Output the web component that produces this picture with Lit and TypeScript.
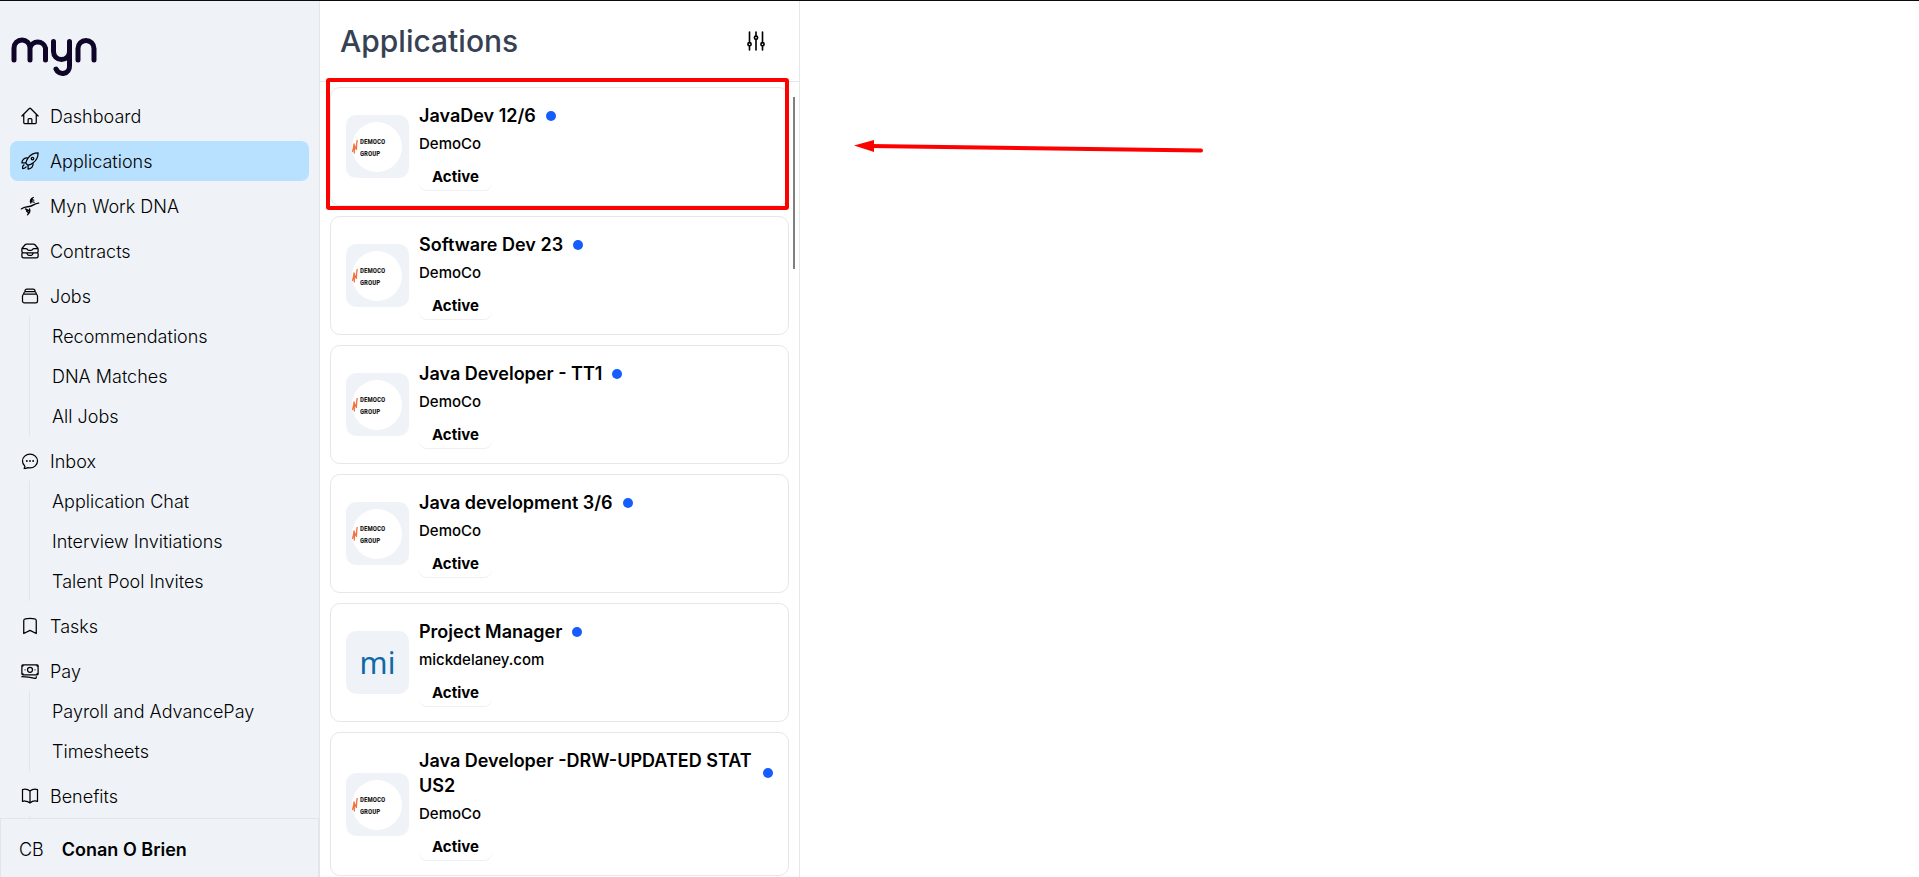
import { LitElement, html, svg, css, nothing } from "lit";
import { customElement } from "lit/decorators.js";
import { classMap } from "lit/directives/class-map.js";

interface NavItem {
  label: string;
  icon: string;
  active?: boolean;
  children?: string[];
}

interface Application {
  title: string;
  company: string;
  status: string;
  initials?: string;
  highlighted?: boolean;
}

const ICONS: Record<string, string[]> = {
  home: [
    "m2.25 12 8.954-8.955c.44-.439 1.152-.439 1.591 0L21.75 12M4.5 9.75v10.125c0 .621.504 1.125 1.125 1.125H9.75v-4.875c0-.621.504-1.125 1.125-1.125h2.25c.621 0 1.125.504 1.125 1.125V21h4.125c.621 0 1.125-.504 1.125-1.125V9.75M8.25 21h8.25",
  ],
  rocket: [
    "M15.59 14.37a6 6 0 0 1-5.84 7.38v-4.8m5.84-2.58a14.98 14.98 0 0 0 6.16-12.12A14.98 14.98 0 0 0 9.631 8.41m5.96 5.96a14.926 14.926 0 0 1-5.841 2.58m-.119-8.54a6 6 0 0 0-7.381 5.84h4.8m2.581-5.84a14.927 14.927 0 0 0-2.58 5.84m2.699 2.7c-.103.021-.207.041-.311.06a15.09 15.09 0 0 1-2.448-2.448 14.9 14.9 0 0 1 .06-.312m-2.24 2.39a4.493 4.493 0 0 0-1.757 4.306 4.493 4.493 0 0 0 4.306-1.758M16.5 9a1.5 1.5 0 1 1-3 0 1.5 1.5 0 0 1 3 0Z",
  ],
  dna: [
    "M1.5 15.5C5 12.5 9 13 12.5 12S18 8.500 22.5 8.500M2.500 15C6 12.500 9 13.500 12.500 12.500S18 9 22 8.700",
    "M13 8.500C11.500 5.500 13 3 16 1.800M13 6.500l4 1M13.800 4.500l2.700.5M13.200 7.500l1.500-4",
    "M11.500 15.500c1 3-.5 5.500-2.500 7M6.500 15.500l4.500 2M8 18.500l2.500 1M7.500 16.500l2.500 4",
  ],
  contracts: [
    "m7.875 14.25 1.214 1.942a2.25 2.25 0 0 0 1.908 1.058h2.006c.776 0 1.497-.4 1.908-1.058l1.214-1.942M2.41 9h4.636a2.25 2.25 0 0 1 1.872 1.002l.164.246a2.25 2.25 0 0 0 1.872 1.002h2.092a2.25 2.25 0 0 0 1.872-1.002l.164-.246A2.25 2.25 0 0 1 16.954 9h4.636M2.41 9a2.25 2.25 0 0 0-.16.832V12a2.25 2.25 0 0 0 2.25 2.25h15A2.25 2.25 0 0 0 21.750 12V9.832c0-.287-.055-.57-.16-.832M2.41 9a2.25 2.25 0 0 1 .382-.632l3.285-3.832a2.25 2.25 0 0 1 1.708-.786h8.430c.657 0 1.281.287 1.709.786l3.284 3.832c.163.19.291.404.382.632M4.500 20.250h15A2.25 2.25 0 0 0 21.750 18v-2.625c0-.621-.504-1.125-1.125-1.125H3.375c-.621 0-1.125.504-1.125 1.125V18a2.25 2.25 0 0 0 2.25 2.25Z",
  ],
  stack: [
    "M6 6.878V6a2.25 2.25 0 0 1 2.25-2.25h7.5A2.25 2.25 0 0 1 18 6v.878m-12 0c.235-.083.487-.128.75-.128h10.5c.263 0 .515.045.75.128m-12 0A2.25 2.25 0 0 0 4.5 9v.878m13.5-3A2.25 2.25 0 0 1 19.5 9v.878m0 0a2.246 2.246 0 0 0-.75-.128H5.25c-.263 0-.515.045-.75.128m15 0A2.25 2.25 0 0 1 21 12v6a2.25 2.25 0 0 1-2.25 2.25H5.25A2.25 2.25 0 0 1 3 18v-6c0-.98.626-1.813 1.5-2.122",
  ],
  bubble: [
    "M8.625 12a.375.375 0 1 1-.75 0 .375.375 0 0 1 .75 0Zm0 0H8.25m4.125 0a.375.375 0 1 1-.75 0 .375.375 0 0 1 .75 0Zm0 0H12m4.125 0a.375.375 0 1 1-.75 0 .375.375 0 0 1 .75 0Zm0 0h-.375M21 12c0 4.556-4.03 8.25-9 8.25a9.764 9.764 0 0 1-2.555-.337A5.972 5.972 0 0 1 5.41 20.97a5.969 5.969 0 0 1-.474-.065 4.48 4.48 0 0 0 .978-2.025c.09-.457-.133-.901-.467-1.226C3.93 16.178 3 14.189 3 12c0-4.556 4.03-8.25 9-8.25s9 3.694 9 8.25Z",
  ],
  bookmark: [
    "M17.593 3.322c1.1.128 1.907 1.077 1.907 2.185V21L12 17.25 4.5 21V5.507c0-1.108.806-2.057 1.907-2.185a48.507 48.507 0 0 1 11.186 0Z",
  ],
  cash: [
    "M2.25 18.75a60.07 60.07 0 0 1 15.797 2.101c.727.198 1.453-.342 1.453-1.096V18.75M3.75 4.5v.75A.75.75 0 0 1 3 6h-.75m0 0v-.375c0-.621.504-1.125 1.125-1.125H20.250M2.250 6v9m18-10.500v.750c0 .414.336.750.750.750h.750m-1.500-1.500h.375c.621 0 1.125.504 1.125 1.125v9.750c0 .621-.504 1.125-1.125 1.125h-.375m1.500-1.500H21a.75.75 0 0 0-.75.75v.75m0 0H3.750m0 0h-.375a1.125 1.125 0 0 1-1.125-1.125V15m1.500 1.500v-.75A.75.75 0 0 0 3 15h-.75M15 10.500a3 3 0 1 1-6 0 3 3 0 0 1 6 0Zm3 0h.008v.008H18V10.500Zm-12 0h.008v.008H6V10.500Z",
  ],
  book: [
    "M12 6.042A8.967 8.967 0 0 0 6 3.75c-1.052 0-2.062.18-3 .512v14.25A8.987 8.987 0 0 1 6 18c2.305 0 4.408.867 6 2.292m0-14.25a8.966 8.966 0 0 1 6-2.292c1.052 0 2.062.18 3 .512v14.25A8.987 8.987 0 0 0 18 18a8.967 8.967 0 0 0-6 2.292m0-14.25v14.25",
  ],
  sliders: [
    "M6 13.5V3.75m0 9.75a1.5 1.5 0 0 1 0 3m0-3a1.5 1.5 0 0 0 0 3m0 3.75V16.5m12-3V3.75m0 9.75a1.5 1.5 0 0 1 0 3m0-3a1.5 1.5 0 0 0 0 3m0 3.75V16.5m-6-9V3.75m0 3.75a1.5 1.5 0 0 1 0 3m0-3a1.5 1.5 0 0 0 0 3m0 9.75V10.5",
  ],
};

const NAV: NavItem[] = [
  { label: "Dashboard", icon: "home" },
  { label: "Applications", icon: "rocket", active: true },
  { label: "Myn Work DNA", icon: "dna" },
  { label: "Contracts", icon: "contracts" },
  { label: "Jobs", icon: "stack", children: ["Recommendations", "DNA Matches", "All Jobs"] },
  {
    label: "Inbox",
    icon: "bubble",
    children: ["Application Chat", "Interview Invitiations", "Talent Pool Invites"],
  },
  { label: "Tasks", icon: "bookmark" },
  { label: "Pay", icon: "cash", children: ["Payroll and AdvancePay", "Timesheets"] },
  { label: "Benefits", icon: "book", children: [] },
];

const APPLICATIONS: Application[] = [
  { title: "JavaDev 12/6", company: "DemoCo", status: "Active", highlighted: true },
  { title: "Software Dev 23", company: "DemoCo", status: "Active" },
  { title: "Java Developer - TT1", company: "DemoCo", status: "Active" },
  { title: "Java development 3/6", company: "DemoCo", status: "Active" },
  { title: "Project Manager", company: "mickdelaney.com", status: "Active", initials: "mi" },
  { title: "Java Developer -DRW-UPDATED STATUS2", company: "DemoCo", status: "Active" },
];

const icon = (name: string, size: number) => html`
  <svg
    width=${size}
    height=${size}
    viewBox="0 0 24 24"
    fill="none"
    stroke="currentColor"
    stroke-width="1.5"
    stroke-linecap="round"
    stroke-linejoin="round"
    aria-hidden="true"
  >
    ${ICONS[name].map((d) => svg`<path d=${d}></path>`)}
  </svg>
`;

@customElement("side-nav")
export class SideNav extends LitElement {
  static styles = css`
    :host {
      display: flex;
      flex-direction: column;
      box-sizing: border-box;
      min-height: 0;
      background: #eff3f8;
      border-right: 1px solid #e2e5ea;
      font-size: 18px;
      font-weight: 300;
      line-height: 28px;
    }
    .logo {
      display: block;
      flex: none;
      padding: 32px 10px 16px;
      height: 47px;
    }
    .menu {
      flex: 1;
      min-height: 0;
      overflow: hidden;
      padding: 0 10px;
      display: flex;
      flex-direction: column;
      gap: 5px;
    }
    .group {
      flex: none;
    }
    .link {
      display: flex;
      align-items: center;
      gap: 10px;
      height: 40px;
      padding-left: 10px;
      border-radius: 8px;
      color: #000;
      text-decoration: none;
    }
    .link svg {
      flex: none;
    }
    .link span {
      padding-top: 2px;
    }
    .link.active {
      background: #b8e0ff;
    }
    .sub {
      list-style: none;
      margin: 0 0 0 19px;
      padding: 0 0 0 22px;
      min-height: 40px;
      border-left: 1px solid #e2e5ea;
    }
    .sub .link {
      padding-left: 0;
    }
    .user {
      flex: none;
      display: flex;
      align-items: center;
      gap: 18px;
      height: 54px;
      padding: 4px 18px 0;
      border: 1px solid #e2e5ea;
      border-bottom: 0;
    }
    .name {
      font-weight: 600;
    }
  `;

  render() {
    return html`
      <a class="logo" href="#" aria-label="myn">
        <svg width="90" height="47" viewBox="0 0 90 47" fill="none" stroke="#0f0528" stroke-width="5" stroke-linecap="round" stroke-linejoin="round">
          <path d="M4 27V15a8 8 0 0 1 16 0V27M20 15a8 8 0 0 1 15.500 0V27" />
          <path d="M43.500 8.500V18.500a8 8 0 0 0 16 0V8.500V33A7 7 0 0 1 46 36" />
          <path d="M68 27V15.500a8 8 0 0 1 16 0V27" />
        </svg>
      </a>
      <nav class="menu" aria-label="Main">
        ${NAV.map(
          (item) => html`
            <div class="group">
              <a class=${classMap({ link: true, active: !!item.active })} href="#">
                ${icon(item.icon, 20)}<span>${item.label}</span>
              </a>
              ${item.children
                ? html`<ul class="sub">
                    ${item.children.map(
                      (c) => html`<li><a class="link" href="#"><span>${c}</span></a></li>`
                    )}
                  </ul>`
                : nothing}
            </div>
          `
        )}
      </nav>
      <div class="user"><span>CB</span><span class="name">Conan O Brien</span></div>
    `;
  }
}

@customElement("application-card")
export class ApplicationCard extends LitElement {
  static properties = { item: { attribute: false } };
  declare item: Application;

  static styles = css`
    :host {
      display: block;
      position: relative;
      flex: none;
    }
    .card {
      display: flex;
      align-items: center;
      gap: 10px;
      padding: 15px;
      border: 1px solid #e5e7eb;
      border-radius: 10px;
      color: #000;
      text-decoration: none;
    }
    .avatar {
      flex: none;
      display: flex;
      align-items: center;
      justify-content: center;
      width: 63px;
      height: 63px;
      border-radius: 10px;
      background: #eff3f8;
      font: 30px/63px "Noto Sans", sans-serif;
      color: #0d69a7;
    }
    .mark {
      font: 700 7px "Liberation Sans Narrow", "Roboto Condensed", Roboto, sans-serif;
      fill: #1a1a1a;
    }
    .info {
      flex: 1;
      min-width: 0;
      display: flex;
      flex-direction: column;
      align-items: flex-start;
      gap: 5px;
    }
    .heading {
      display: flex;
      align-items: center;
      gap: 10px;
    }
    .title {
      margin: 0;
      font-size: 18px;
      line-height: 25px;
      font-weight: 600;
      word-break: break-all;
    }
    .dot {
      flex: none;
      width: 10px;
      height: 10px;
      border-radius: 50%;
      background: #155dfc;
    }
    .company {
      font-size: 15px;
      line-height: 22px;
      font-weight: 500;
    }
    .status {
      box-sizing: border-box;
      height: 30px;
      padding: 5px 13px 0;
      border-radius: 8px;
      font-size: 15px;
      line-height: 24px;
      font-weight: 700;
      box-shadow: 0 1px 0 #eef0f3;
    }
    .highlight {
      position: absolute;
      inset: -9px 0 -4px -4px;
      border: 4px solid #f00;
      border-radius: 3px;
      pointer-events: none;
    }
  `;

  render() {
    const a = this.item;
    return html`
      <a class="card" href="#">
        <div class="avatar">
          ${a.initials
            ? a.initials
            : html`<svg width="63" height="63" viewBox="0 0 63 63" role="img" aria-label=${a.company}>
                <circle cx="31" cy="32" r="25" fill="#fff" />
                <path d="M6.500 37L8 28.500L9.700 33.500L11.200 25L10.500 35L8.800 31.500L8.300 38.500L7.500 33.500Z" fill="#f0632a" stroke="#f0632a" stroke-width=".7" />
                <text class="mark" x="14" y="29">DEMOCO</text>
                <text class="mark" x="14" y="41">GROUP</text>
              </svg>`}
        </div>
        <div class="info">
          <div class="heading"><h2 class="title">${a.title}</h2><span class="dot"></span></div>
          <span class="company">${a.company}</span>
          <span class="status">${a.status}</span>
        </div>
      </a>
      ${a.highlighted ? html`<div class="highlight"></div>` : nothing}
    `;
  }
}

@customElement("app-root")
export class AppRoot extends LitElement {
  static styles = css`
    :host {
      display: grid;
      grid-template-columns: 320px 480px minmax(0, 1fr);
      grid-template-rows: minmax(0, 1fr);
      box-sizing: border-box;
      height: 100vh;
      overflow: hidden;
      border-top: 1px solid #0b0b0f;
      background: #fff;
      color: #000;
      font-family: Inter, sans-serif;
    }
    .column {
      display: flex;
      flex-direction: column;
      min-height: 0;
      border-right: 1px solid #e5e7eb;
    }
    .header {
      flex: none;
      display: flex;
      align-items: center;
      justify-content: space-between;
      height: 80px;
      padding: 0 30px 0 20px;
      border-bottom: 1px solid #e5e7eb;
    }
    .heading {
      margin: 0;
      font-size: 30px;
      line-height: 40px;
      font-weight: 500;
      color: #364153;
    }
    .filter {
      display: flex;
      padding: 0;
      border: 0;
      background: none;
      color: #000;
    }
    .body {
      flex: 1;
      min-height: 0;
      display: flex;
      justify-content: space-between;
    }
    .list {
      flex: 1;
      min-width: 0;
      padding: 5px 4px 0 10px;
      display: flex;
      flex-direction: column;
      gap: 10px;
    }
    .scroll {
      flex: none;
      width: 2px;
      height: 172px;
      margin: 15px 4px 0 0;
      background: #808080;
    }
    .detail {
      position: relative;
    }
    .arrow {
      position: absolute;
      left: 50px;
      top: 132px;
    }
  `;

  render() {
    return html`
      <side-nav></side-nav>
      <section class="column">
        <header class="header">
          <h1 class="heading">Applications</h1>
          <button class="filter" aria-label="Filter">${icon("sliders", 26)}</button>
        </header>
        <div class="body">
          <div class="list">
            ${APPLICATIONS.map((a) => html`<application-card .item=${a}></application-card>`)}
          </div>
          <div class="scroll"></div>
        </div>
      </section>
      <main class="detail">
        <svg class="arrow" width="360" height="26" viewBox="0 0 360 26" aria-hidden="true">
          <path d="M20 13L351 17.500" stroke="#f00" stroke-width="4" stroke-linecap="round" />
          <path d="M4 12.500L24 7V19Z" fill="#f00" />
        </svg>
      </main>
    `;
  }
}
